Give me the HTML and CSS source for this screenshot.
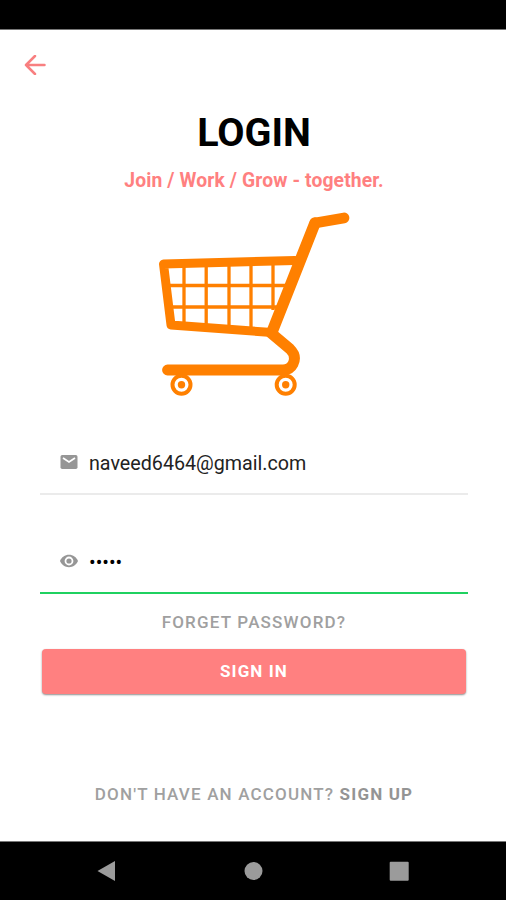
FILE: index.html
```html
<!DOCTYPE html>
<html lang="en">
<head>
    <meta charset="utf-8">
    <title>Login</title>
    <link rel="stylesheet" href="styles.css">
</head>
<body>
    <div class="status-bar"></div>

    <main class="screen">
        <a class="back" href="#" aria-label="Back">
            <svg width="22" height="20" viewBox="0 0 22 20">
                <path d="M20.500 10H2M11 1L2 10l9 9"/>
            </svg>
        </a>

        <h1>LOGIN</h1>
        <p class="tagline">Join / Work / Grow - together.</p>

        <svg class="cart" width="210" height="200" viewBox="0 0 210 200">
            <!-- basket grid -->
            <path class="grid" d="M34 62v64M56.200 62v66M79 62v67M101 61v70M123 60v50M15 85.500h121M17 107h110"/>
            <!-- basket and handle -->
            <path class="rail" d="M145 60.500L13.500 64l7.500 61L122 132.500"/>
            <path class="pole" d="M122 132L165 23"/>
            <path class="base" d="M165 23l29-5"/>
            <!-- base -->
            <path class="base" d="M121 133L140 149Q147 156 143 164Q140 170 133 170H17.500"/>
            <circle class="tyre" cx="31.500" cy="184.700" r="9"/>
            <circle class="hub" cx="31.500" cy="184.700" r="3.700"/>
            <circle class="tyre" cx="135.700" cy="184.700" r="9"/>
            <circle class="hub" cx="135.700" cy="184.700" r="3.700"/>
        </svg>

        <form class="login-form">
            <div class="field">
                <svg class="field-icon" width="18" height="18" viewBox="0 0 18 18">
                    <rect x="0.500" y="2" width="17" height="14" rx="1.700"/>
                    <path class="flap" d="M3 5l6 4 6-4"/>
                </svg>
                <span class="value">naveed6464@gmail.com</span>
            </div>
            <div class="field active">
                <svg class="field-icon" width="18" height="18" viewBox="0 0 18 18">
                    <path fill-rule="evenodd" d="M9 2.800C5 2.800 1.500 5.300 0 9c1.500 3.700 5 6.200 9 6.200s7.500-2.500 9-6.200C16.500 5.300 13 2.800 9 2.800zM9 13.400a4.400 4.400 0 1 1 0-8.800 4.400 4.400 0 0 1 0 8.800z"/>
                    <circle cx="9" cy="9" r="2.600"/>
                </svg>
                <span class="value password">•••••</span>
            </div>
            <a class="forgot" href="#">FORGET PASSWORD?</a>
            <button type="button">SIGN IN</button>
        </form>

        <p class="signup">DON'T HAVE AN ACCOUNT? <a href="#">SIGN UP</a></p>
    </main>

    <nav class="nav-bar">
        <svg width="20" height="22" viewBox="0 0 20 22"><path d="M0.500 11L18 1v20z"/></svg>
        <svg width="20" height="22" viewBox="0 0 20 22"><circle cx="10.500" cy="11" r="9"/></svg>
        <svg width="20" height="22" viewBox="0 0 20 22"><rect x="0.700" y="1.700" width="19" height="19" rx="1"/></svg>
    </nav>
</body>
</html>
```
FILE: styles.css
```css
* {
    box-sizing: border-box;
}
body {
    margin: 0;
    height: 900px;
    display: flex;
    flex-direction: column;
    font-family: Roboto, sans-serif;
    background: #fff;
}
a {
    color: inherit;
    text-decoration: none;
}
svg {
    display: block;
    flex: none;
}
.status-bar {
    height: 30px;
    background: #000;
    border-bottom: 1px solid #777;
}
.screen {
    flex: 1;
    padding-left: 2px;
    display: flex;
    flex-direction: column;
    align-items: center;
}
.back {
    align-self: flex-start;
    margin: 25px 0 0 22px;
}
.back svg {
    fill: none;
    stroke: #f87f80;
    stroke-width: 2.5;
    stroke-linecap: round;
    stroke-linejoin: round;
}
h1 {
    margin: 36px 0 0;
    font-size: 39.5px;
    line-height: 44px;
    font-weight: 700;
    color: #000;
}
.tagline {
    margin: 14px 0 0;
    font-size: 19.3px;
    line-height: 24px;
    font-weight: 700;
    letter-spacing: 0.13px;
    color: #ff8080;
}
.cart {
    margin: 7px 0 0 2px;
    fill: none;
    stroke: #ff8000;
    stroke-linecap: round;
    stroke-linejoin: round;
}
.grid {
    stroke-width: 3.3;
    stroke-linecap: butt;
}
.rail {
    stroke-width: 9;
}
.pole {
    stroke-width: 11.5;
}
.base {
    stroke-width: 10.8;
}
.tyre {
    fill: #fff;
    stroke-width: 4;
}
.hub {
    fill: #ff8000;
    stroke: none;
}
.login-form {
    width: 428px;
    margin-top: 30px;
    display: flex;
    flex-direction: column;
}
.field {
    height: 65px;
    padding: 0 20px;
    display: flex;
    align-items: center;
    gap: 11px;
    border-bottom: 2px solid #ebebeb;
}
.field.active {
    margin-top: 34px;
    border-bottom-color: #1fd160;
}
.field-icon {
    fill: #969696;
}
.flap {
    fill: none;
    stroke: #fff;
    stroke-width: 1.7;
}
.value {
    padding-top: 5px;
    font-size: 19.7px;
    line-height: 24px;
    color: #222;
}
.password {
    color: #000;
}
.forgot {
    margin-top: 18px;
    align-self: center;
    font-size: 17px;
    line-height: 20px;
    font-weight: 500;
    letter-spacing: 1.2px;
    color: #a0a0a0;
}
button {
    height: 45px;
    margin: 17px 2px 0;
    padding: 0 0 2px;
    border: 0;
    border-radius: 4px;
    background: #ff8080;
    box-shadow: 0 1px 2px rgba(0, 0, 0, 0.45);
    font-family: inherit;
    font-size: 17px;
    font-weight: 700;
    letter-spacing: 1.1px;
    color: #fff;
}
.signup {
    margin: 90px 0 0;
    font-size: 17px;
    line-height: 20px;
    font-weight: 500;
    letter-spacing: 1.17px;
    color: #a0a0a0;
}
.signup a {
    font-weight: 700;
    color: #949494;
}
.nav-bar {
    height: 59px;
    padding: 0 97px;
    display: flex;
    align-items: center;
    justify-content: space-between;
    background: #000;
    border-top: 1px solid #777;
    fill: #9b9b9b;
}
```
